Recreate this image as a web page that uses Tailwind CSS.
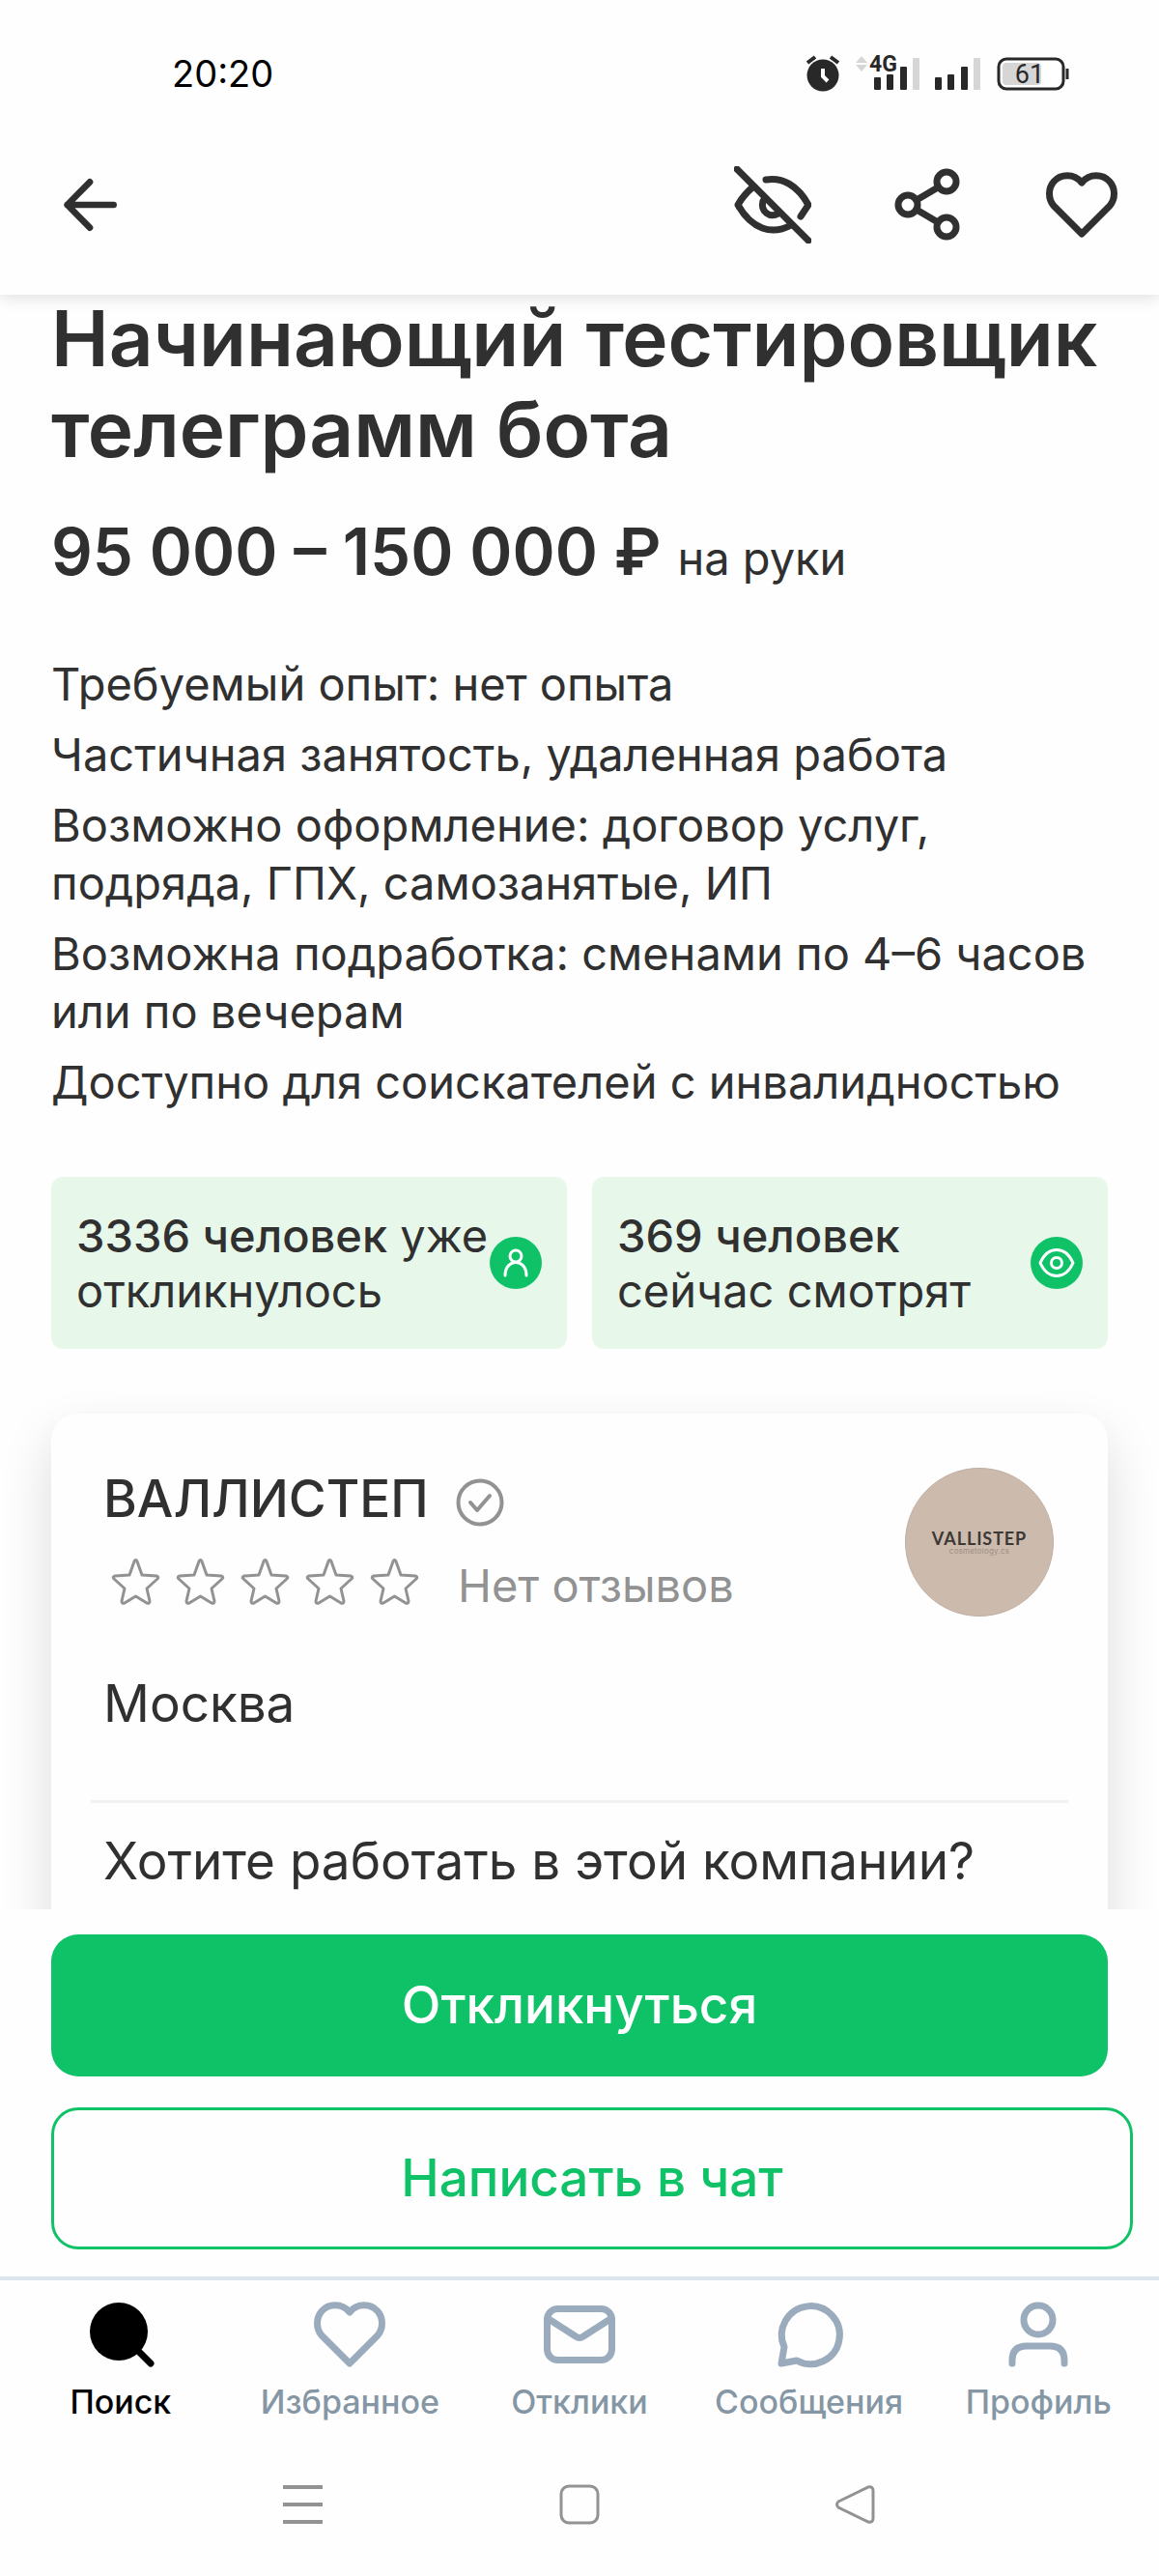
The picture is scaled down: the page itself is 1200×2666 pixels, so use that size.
<!DOCTYPE html>
<html lang="ru">
<head>
  <meta charset="UTF-8" />
  <meta name="viewport" content="width=device-width, initial-scale=1.0"/>
  <title>Начинающий тестировщик телеграмм бота</title>
  <script src="https://cdn.jsdelivr.net/npm/@tailwindcss/browser@4"></script>
</head>
<body class="bg-[#fefefe] text-[#303030] font-['Inter',sans-serif]">
<div class="flex flex-col h-screen overflow-hidden">

  <!-- Status bar + toolbar -->
  <header class="relative z-10 shrink-0 bg-[#fefefe] shadow-[0_2px_16px_rgba(0,0,0,0.14)]">
    <div class="flex items-center justify-between h-38 pl-[178px] pr-23">
      <span class="text-[38px] leading-none text-black">20:20</span>
      <div class="flex items-center gap-4 text-[#282828]">
        <svg class="w-[36px] h-[38px]" viewBox="0 0 36 38" fill="none">
          <circle cx="18" cy="21" r="16.500" fill="currentColor"/>
          <path d="M2 8l8-6M34 8l-8-6" stroke="currentColor" stroke-width="4"/>
          <path d="M18 14v8l5 5" stroke="#fff" stroke-width="4"/>
        </svg>
        <svg class="w-[66px] h-[38px] overflow-visible" viewBox="0 0 66 38">
          <path d="M6 1l6 7H0zM6 17l6-7H0z" fill="#d6d6d6"/>
          <text x="14" y="17" font-size="23" font-weight="700" fill="currentColor" font-family="Roboto, sans-serif">4G</text>
          <rect x="19" y="23" width="7" height="13" rx="1" fill="currentColor"/>
          <rect x="32" y="20" width="7" height="16" rx="1" fill="currentColor"/>
          <rect x="46" y="12" width="7" height="24" rx="1" fill="currentColor"/>
          <rect x="59" y="3" width="7" height="33" rx="1" fill="#d6d6d6"/>
        </svg>
        <svg class="w-[48px] h-[38px]" viewBox="0 0 48 38">
          <rect x="0" y="23" width="7" height="13" rx="1" fill="currentColor"/>
          <rect x="13" y="20" width="7" height="16" rx="1" fill="currentColor"/>
          <rect x="27" y="12" width="7" height="24" rx="1" fill="currentColor"/>
          <rect x="40" y="3" width="7" height="33" rx="1" fill="#d6d6d6"/>
        </svg>
        <svg class="w-[76px] h-[38px]" viewBox="0 0 76 38">
          <rect x="2" y="4" width="67" height="31" rx="8" fill="#fff" stroke="currentColor" stroke-width="3"/>
          <rect x="6" y="8" width="40" height="23" rx="4" fill="#d6d6d6"/>
          <path d="M73 14v11" stroke="currentColor" stroke-width="3"/>
          <text x="34" y="29" font-size="27" text-anchor="middle" fill="currentColor" font-family="Roboto, sans-serif">61</text>
        </svg>
      </div>
    </div>
    <div class="flex items-start justify-between h-[153px] pt-5 pl-[53px] pr-10">
      <button type="button" aria-label="Назад">
        <svg class="w-20 h-20" viewBox="0 0 24 24" fill="none" stroke="currentColor" stroke-width="2" stroke-linecap="round" stroke-linejoin="round"><path d="M19.4 12H5M12 4.9L5 12l7 7.1"/></svg>
      </button>
      <div class="flex gap-20">
        <button type="button" aria-label="Скрыть вакансию">
          <svg class="w-20 h-20" viewBox="0 0 80 80" fill="none" stroke="currentColor" stroke-width="7" stroke-linecap="round" stroke-linejoin="round">
            <path d="M3 3l74 74"/>
            <path d="M33 14c17-3 33 6 44 26l-8 12"/>
            <path d="M19 22C12 28 8 33 4 40c14 25 35 32 55 21"/>
            <path d="M30 36c-3 11 7 18 16 13"/>
          </svg>
        </button>
        <button type="button" aria-label="Поделиться">
          <svg class="w-20 h-20" viewBox="0 0 80 80" fill="none" stroke="currentColor" stroke-width="7">
            <circle cx="60" cy="16" r="10"/><circle cx="20" cy="40" r="10"/><circle cx="60" cy="63" r="10"/>
            <path d="M29 35l22-13M29 45l22 13"/>
          </svg>
        </button>
        <button type="button" aria-label="В избранное">
          <svg class="w-20 h-20" viewBox="0 0 80 80" fill="none" stroke="currentColor" stroke-width="7" stroke-linejoin="round">
            <path d="M40 17C32 7 18 8 11 16C5 23 5 34 11 41L40 70L69 41C75 34 75 23 69 16C62 8 48 7 40 17z"/>
          </svg>
        </button>
      </div>
    </div>
  </header>

  <main class="flex-1 min-h-0 -mt-0.5 px-[53px]">
    <h1 class="text-[80px] leading-[94px] font-semibold">Начинающий тестировщик телеграмм бота</h1>
    <p class="mt-9 text-[67px] leading-[88px] font-semibold">95 000 – 150 000 ₽ <span class="text-[47px] font-normal">на руки</span></p>

    <div class="mt-14 flex flex-col gap-[13px] text-[47px] leading-[60px]">
      <p>Требуемый опыт: нет опыта</p>
      <p>Частичная занятость, удаленная работа</p>
      <p>Возможно оформление: договор услуг, подряда, ГПХ, самозанятые, ИП</p>
      <p>Возможна подработка: сменами по 4–6 часов или по вечерам</p>
      <p>Доступно для соискателей с инвалидностью</p>
    </div>

    <div class="mt-17 grid grid-cols-2 gap-[26px] text-[47px] leading-[57px]">
      <div class="flex items-center justify-between rounded-xl bg-[#e7f7ea] px-[26px] py-8">
        <p class="whitespace-nowrap"><span class="font-medium">3336 человек</span> уже<br>откликнулось</p>
        <svg class="w-[54px] h-[54px] shrink-0" viewBox="0 0 54 54" fill="none" stroke="#fff" stroke-width="3" stroke-linecap="round">
          <circle cx="27" cy="27" r="27" fill="#0fc267" stroke="none"/>
          <circle cx="27" cy="20" r="6"/>
          <path d="M16 40c0-18 22-18 22 0"/>
        </svg>
      </div>
      <div class="flex items-center justify-between rounded-xl bg-[#e7f7ea] px-[26px] py-8">
        <p class="whitespace-nowrap"><span class="font-medium">369 человек</span><br>сейчас смотрят</p>
        <svg class="w-[54px] h-[54px] shrink-0" viewBox="0 0 54 54" fill="none" stroke="#fff" stroke-width="3" stroke-linejoin="round">
          <circle cx="27" cy="27" r="27" fill="#0fc267" stroke="none"/>
          <path d="M10 27c8-18 26-18 34 0c-8 18-26 18-34 0z"/>
          <circle cx="27" cy="27" r="5.500"/>
        </svg>
      </div>
    </div>

    <!-- Employer card -->
    <section class="mt-[67px] h-[640px] rounded-[28px] bg-[#fefefe] pt-14 shadow-[0_24px_54px_rgba(0,0,0,0.14)]">
      <div class="flex justify-between pl-[54px] pr-14">
        <div>
          <h2 class="flex items-center gap-7 text-[53px] leading-[64px] font-medium">ВАЛЛИСТЕП
            <svg class="w-[50px] h-[50px] mt-2" viewBox="0 0 50 50" fill="none" stroke="#929292" stroke-width="4" stroke-linecap="round" stroke-linejoin="round"><circle cx="25" cy="25" r="22.500"/><path d="M15 25l7 8 13-15"/></svg>
          </h2>
          <div class="mt-5 flex items-center text-[47px] leading-[60px] text-[#929292]">
            <div class="flex gap-4 pl-2">
              <svg class="w-[51px] h-[50px]" viewBox="0 0 51 50" fill="none" stroke="#929292" stroke-width="3" stroke-linejoin="round"><path d="M24 4q1.500-3 3 0L32 18L47 19q3 1 1 3L37 32L40 45q0 3-3 2L25.500 40L14 47q-3 1-3-2L14 32L3 22q-2-2 1-3L19 18z"/></svg>
              <svg class="w-[51px] h-[50px]" viewBox="0 0 51 50" fill="none" stroke="#929292" stroke-width="3" stroke-linejoin="round"><path d="M24 4q1.500-3 3 0L32 18L47 19q3 1 1 3L37 32L40 45q0 3-3 2L25.500 40L14 47q-3 1-3-2L14 32L3 22q-2-2 1-3L19 18z"/></svg>
              <svg class="w-[51px] h-[50px]" viewBox="0 0 51 50" fill="none" stroke="#929292" stroke-width="3" stroke-linejoin="round"><path d="M24 4q1.500-3 3 0L32 18L47 19q3 1 1 3L37 32L40 45q0 3-3 2L25.500 40L14 47q-3 1-3-2L14 32L3 22q-2-2 1-3L19 18z"/></svg>
              <svg class="w-[51px] h-[50px]" viewBox="0 0 51 50" fill="none" stroke="#929292" stroke-width="3" stroke-linejoin="round"><path d="M24 4q1.500-3 3 0L32 18L47 19q3 1 1 3L37 32L40 45q0 3-3 2L25.500 40L14 47q-3 1-3-2L14 32L3 22q-2-2 1-3L19 18z"/></svg>
              <svg class="w-[51px] h-[50px]" viewBox="0 0 51 50" fill="none" stroke="#929292" stroke-width="3" stroke-linejoin="round"><path d="M24 4q1.500-3 3 0L32 18L47 19q3 1 1 3L37 32L40 45q0 3-3 2L25.500 40L14 47q-3 1-3-2L14 32L3 22q-2-2 1-3L19 18z"/></svg>
            </div>
            <span class="pl-10 pt-2">Нет отзывов</span>
          </div>
          <p class="mt-14 text-[53px] leading-[72px]">Москва</p>
        </div>
        <div class="flex flex-col items-center justify-center w-[154px] h-[154px] rounded-full border border-[#c0aea3] bg-[#ccbaad]">
          <span class="text-[18px] leading-[18px] font-bold text-[#3c3835] font-['Lato',sans-serif] tracking-wider">VALLISTEP</span>
          <span class="text-[8px] leading-[9px] text-[#9c8d83] tracking-wide">cosmetology.cs</span>
        </div>
      </div>
      <hr class="mx-[41px] mt-16 border-t-3 border-[#f1f1f1]">
      <p class="mt-6 px-[54px] text-[53px] leading-[72px]">Хотите работать в этой компании?</p>
    </section>
  </main>

  <!-- Actions -->
  <div class="relative z-10 shrink-0 flex flex-col gap-8 bg-[#fefefe] pt-[26px] pb-7 pl-[53px] pr-[27px]">
    <button type="button" class="mr-[26px] h-[147px] rounded-[28px] bg-[#0fc267] text-[53px] font-medium text-white">Откликнуться</button>
    <button type="button" class="h-[147px] rounded-[28px] border-3 border-[#0fc267] text-[53px] font-medium text-[#0fc267]">Написать в чат</button>
  </div>

  <!-- Tabs -->
  <nav class="relative z-10 shrink-0 grid grid-cols-5 border-t-4 border-[#dce4ec] bg-[#fefefe] px-1.5 pt-4 h-[182px] text-center text-[34px] leading-[44px] font-medium text-[#8596a5]">
    <a href="#" class="flex flex-col items-center gap-2 text-black">
      <svg class="w-20 h-20" viewBox="0 0 80 80"><circle cx="38" cy="37" r="30" fill="currentColor"/><path d="M57 56l14 14" stroke="currentColor" stroke-width="7" stroke-linecap="round"/></svg>
      Поиск
    </a>
    <a href="#" class="flex flex-col items-center gap-2">
      <svg class="w-20 h-20" viewBox="0 0 80 80" fill="none" stroke="#9aabbd" stroke-width="7" stroke-linejoin="round"><path d="M40 17C32 7 18 8 11 16C5 23 5 34 11 41L40 70L69 41C75 34 75 23 69 16C62 8 48 7 40 17z"/></svg>
      Избранное
    </a>
    <a href="#" class="flex flex-col items-center gap-2">
      <svg class="w-20 h-20" viewBox="0 0 80 80" fill="none" stroke="#9aabbd" stroke-width="7" stroke-linejoin="round"><rect x="6.500" y="13.500" width="67" height="53" rx="11"/><path d="M8 24l28 18q4 3 8 0l28-18"/></svg>
      Отклики
    </a>
    <a href="#" class="flex flex-col items-center gap-2">
      <svg class="w-20 h-20" viewBox="0 0 80 80" fill="none" stroke="#9aabbd" stroke-width="7" stroke-linejoin="round"><path d="M27 67l-16 3 3-17a30 30 0 1 1 13 14z"/></svg>
      Сообщения
    </a>
    <a href="#" class="flex flex-col items-center gap-2">
      <svg class="w-20 h-20" viewBox="0 0 80 80" fill="none" stroke="#9aabbd" stroke-width="7" stroke-linecap="round"><circle cx="40" cy="25" r="15"/><path d="M13 70V67Q13 52 28 52H52Q67 52 67 67V70"/></svg>
      Профиль
    </a>
  </nav>

  <!-- System navigation -->
  <div class="relative z-10 shrink-0 flex justify-center gap-[242px] bg-[#fefefe] pt-8 h-[128px] text-[#929292]">
    <button type="button" aria-label="Недавние" class="w-11 h-11"><svg class="w-11 h-11" viewBox="0 0 44 44" fill="none" stroke="currentColor" stroke-width="4"><path d="M1 4h41M1 22h41M1 40h41"/></svg></button>
    <button type="button" aria-label="Домой" class="w-11 h-11"><svg class="w-11 h-11" viewBox="0 0 44 44" fill="none" stroke="currentColor" stroke-width="3"><rect x="3" y="3" width="38" height="38" rx="8"/></svg></button>
    <button type="button" aria-label="Назад" class="w-11 h-11"><svg class="w-11 h-11" viewBox="0 0 44 44" fill="none" stroke="currentColor" stroke-width="3"><path d="M4 19L35 4q5-1 5 4V36q0 5-5 4L4 25q-3-3 0-6z"/></svg></button>
  </div>
</div>
</body>
</html>
